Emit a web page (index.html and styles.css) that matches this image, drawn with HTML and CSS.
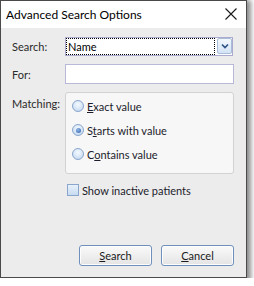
FILE: index.html
```html
<!DOCTYPE html>
<html>
<head>
<meta charset="utf-8">
<link rel="stylesheet" href="styles.css">
</head>
<body>
<div class="window">
  <div class="titlebar">
    <span class="title">Advanced Search Options</span>
    <svg class="close" width="12" height="12" viewBox="0 0 12 12"><path d="M0.5 0.5 L11.5 11.5 M11.5 0.5 L0.5 11.5" stroke="#1a1a1a" stroke-width="1.1" fill="none"/></svg>
  </div>
  <div class="content">
    <div class="form">
      <span class="lbl">Search:</span>
      <div class="combo">
        <div class="combo-field"><span class="focus">Name</span></div>
        <div class="combo-btn">
          <svg width="8" height="6" viewBox="0 0 8 6"><path d="M1 1.5 L4 4.5 L7 1.5" stroke="#2b4f86" stroke-width="1.6" fill="none"/></svg>
        </div>
      </div>
      <span class="lbl">For:</span>
      <div class="textbox"></div>
      <span class="lbl top">Matching:</span>
      <div class="group">
        <div class="radio-row"><span class="radio"></span><span><u>E</u>xact value</span></div>
        <div class="radio-row"><span class="radio checked"></span><span>S<u>t</u>arts with value</span></div>
        <div class="radio-row"><span class="radio"></span><span>C<u>o</u>ntains value</span></div>
      </div>
      <span></span>
      <div class="check-row"><span class="check"></span><span>Show inactive patients</span></div>
    </div>
    <div class="buttons">
      <div class="btn"><u>S</u>earch</div>
      <div class="btn"><u>C</u>ancel</div>
    </div>
  </div>
</div>
</body>
</html>
```
FILE: styles.css
```css
html, body {
  margin: 0;
  padding: 0;
  background: #ffffff;
}
body {
  font-family: Lato, "Open Sans", sans-serif;
  font-size: 11px;
  color: #1e1e1e;
}
.window {
  width: 245px;
  height: 276px;
  border: 1px solid #4a4a4a;
  background: #ececec;
  display: flex;
  flex-direction: column;
  box-shadow: 2px 2px 5px 2px rgba(0, 0, 0, 0.45);
}
.titlebar {
  height: 27px;
  background: #ffffff;
  display: flex;
  align-items: center;
  padding-left: 5px;
  padding-right: 9px;
}
.title {
  font-size: 12px;
  color: #000;
  flex: 1;
  line-height: 15px;
  padding-bottom: 1px;
}
.close {
  display: block;
  margin-top: -1px;
}
.content {
  flex: 1;
  display: flex;
  flex-direction: column;
}
.form {
  display: grid;
  grid-template-columns: 53px 169px;
  row-gap: 8px;
  padding: 9px 0 0 11px;
}
.lbl {
  align-self: center;
  color: #2a2a2a;
}
.lbl.top {
  align-self: start;
  margin-top: 5px;
}
.combo {
  height: 19px;
  box-sizing: border-box;
  width: 168px;
  border: 1px solid #ababd0;
  background: #ffffff;
  display: flex;
  align-items: stretch;
}
.combo-field {
  flex: 1;
  display: flex;
}
.focus {
  flex: 1;
  border: 1px dotted #000;
  line-height: 15px;
  padding-left: 1px;
  color: #000;
  margin-right: 2px;
}
.combo-btn {
  width: 13px;
  margin: 0 0 1px 0;
  border: 1px solid #a9bcd8;
  border-radius: 2px;
  background: linear-gradient(#f3f8fd, #d3e3f5);
  display: flex;
  align-items: center;
  justify-content: center;
}
.combo-btn svg { display: block; }
.textbox {
  height: 20px;
  box-sizing: border-box;
  border: 1px solid #b8b8d8;
  background: #ffffff;
}
.group {
  height: 82px;
  box-sizing: border-box;
  border: 1px solid #d2d2d2;
  border-radius: 3px;
  background: #f7f7f7;
  padding: 1px 0 7px 6px;
  display: flex;
  flex-direction: column;
}
.radio-row {
  height: 24px;
  display: flex;
  align-items: center;
  gap: 3px;
  color: #1c1c2c;
}
.radio {
  width: 12px;
  height: 12px;
  box-sizing: border-box;
  border-radius: 50%;
  border: 1px solid #8aa6cc;
  background: radial-gradient(circle at 50% 35%, #f4f9ff 0%, #d3e4f6 60%, #b7cfe9 100%);
  position: relative;
}
.radio.checked::after {
  content: "";
  position: absolute;
  left: 2.5px;
  top: 2.5px;
  width: 5px;
  height: 5px;
  border-radius: 50%;
  background: radial-gradient(circle at 40% 35%, #8fb6e6, #2f5fa8);
}
.check-row {
  margin-top: 2px;
  margin-left: 2px;
  display: flex;
  align-items: center;
  gap: 3px;
  height: 12px;
  color: #1c1c2c;
}
.check {
  width: 12px;
  height: 12px;
  box-sizing: border-box;
  border: 1px solid #8aa6cc;
  background: linear-gradient(#e8f1fb, #c7dbf1);
}
.buttons {
  margin-top: auto;
  display: flex;
  justify-content: flex-end;
  gap: 9px;
  padding: 0 12px 11px 0;
}
.btn {
  width: 73px;
  height: 21px;
  box-sizing: border-box;
  border: 1px solid #6f8fbd;
  border-radius: 3px;
  background: linear-gradient(#fafafa, #e4e4e4);
  box-shadow: inset 0 0 0 1px #fdfdfd;
  display: flex;
  align-items: center;
  justify-content: center;
  color: #1a1a1a;
}
```
